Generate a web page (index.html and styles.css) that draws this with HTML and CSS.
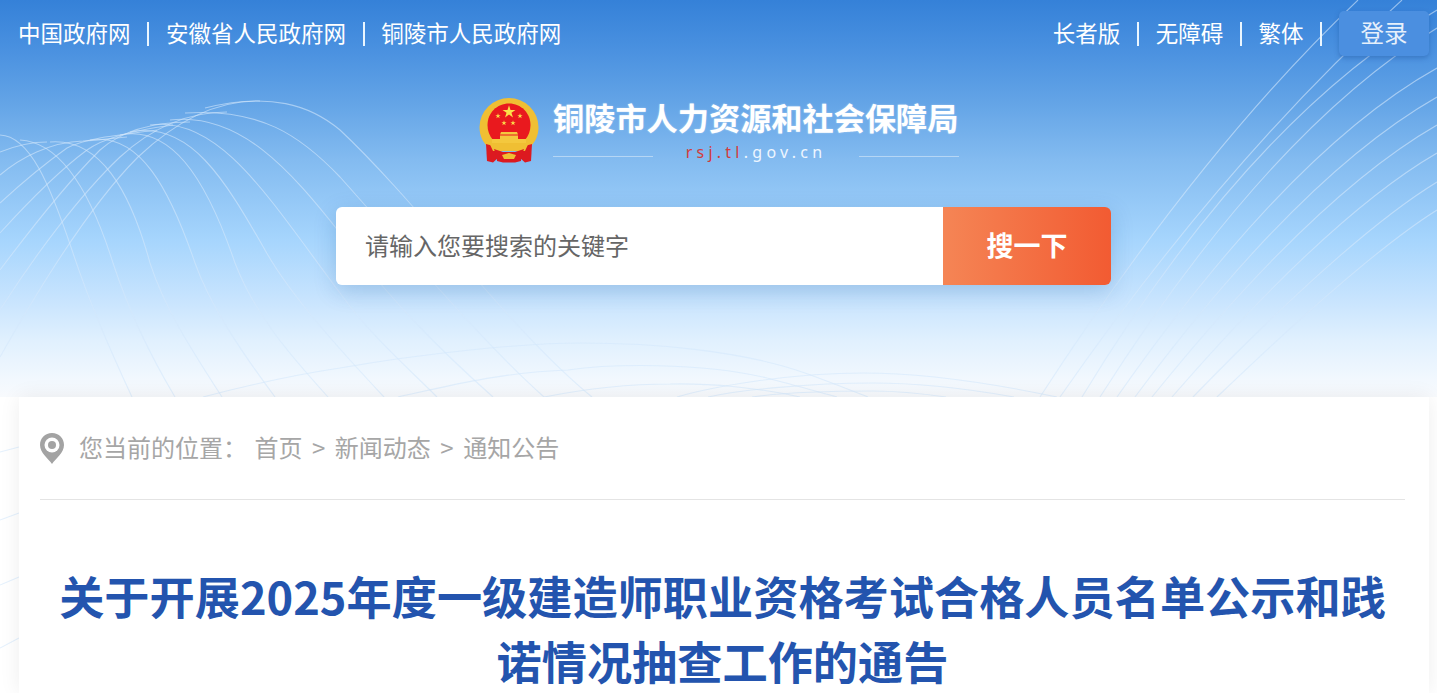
FILE: index.html
```html
<!DOCTYPE html>
<html lang="zh-CN">
<head>
  <meta charset="utf-8">
  <title>铜陵市人力资源和社会保障局</title>
  <link rel="stylesheet" href="styles.css">
</head>
<body>
  <svg class="bg-lines" viewBox="0 0 1437 693" aria-hidden="true">
    <!-- left wave, falling side -->
    <g class="wave">
      <path d="M0 135C30 136 50 185 72 250C90 305 110 350 132 397"/>
      <path d="M20 140C60 142 90 190 113 263C130 315 150 355 175 397"/>
      <path d="M50 142C100 138 130 190 150 263C165 310 195 355 222 397"/>
      <path d="M90 140C140 132 170 190 195 263C210 305 240 350 275 397"/>
      <path d="M120 135C170 125 205 175 235 263C255 315 290 355 328 397"/>
      <path d="M130 132C190 120 225 180 265 250C290 295 340 350 384 397"/>
      <path d="M150 125C220 115 270 200 340 293C370 335 405 365 437 397"/>
      <path d="M170 120C240 112 290 170 340 233C390 300 440 350 493 397"/>
      <path d="M185 113C260 108 300 135 340 177C410 255 480 340 544 397"/>
      <path d="M205 108C270 92 310 105 340 130C420 205 510 330 592 397"/>
    </g>
    <!-- left wave, rising side -->
    <g class="wave">
      <path d="M0 357C35 295 90 205 138 157C175 122 215 100 260 101"/>
      <path d="M0 310C35 255 80 195 120 157C155 125 190 112 227 112"/>
      <path d="M0 270C30 230 65 185 100 150C125 128 160 122 190 122"/>
      <path d="M0 233C30 200 60 170 87 150C105 137 135 130 173 125"/>
      <path d="M0 203C25 180 50 160 67 148C85 138 120 135 157 130"/>
      <path d="M0 175C20 158 50 142 83 141C100 140 115 138 127 137"/>
      <path d="M0 152C15 146 30 142 47 142"/>
    </g>
    <!-- right fan -->
    <g class="wave">
      <path d="M1358 0Q1200 150 1040 397"/>
      <path d="M1402 0Q1225 160 1060 397"/>
      <path d="M1437 10Q1250 120 1082 397"/>
      <path d="M1437 28Q1270 130 1100 397"/>
      <path d="M1437 68Q1290 150 1117 397"/>
      <path d="M1437 97Q1300 175 1135 397"/>
      <path d="M1437 125Q1315 195 1152 397"/>
      <path d="M1437 153Q1330 215 1172 397"/>
      <path d="M1437 182Q1350 235 1193 397"/>
      <path d="M1437 210Q1365 255 1217 397"/>
    </g>
    <!-- low arcs above the card -->
    <g class="wave">
      <path d="M203 397C260 382 300 374 340 368C420 354 520 343 582 343C650 343 740 350 805 373C830 382 850 390 868 397"/>
      <path d="M398 397C440 388 500 372 568 370C610 364 700 362 767 378C790 384 815 391 837 397"/>
      <path d="M544 397C590 388 630 384 670 384C710 383 760 388 800 397"/>
      <path d="M677 397C710 387 790 373 863 373C930 373 1000 385 1057 397"/>
      <path d="M708 397C740 390 810 383 873 383C920 383 975 390 1014 397"/>
      <path d="M752 397C780 393 830 391 873 391C900 391 925 394 946 397"/>
      <path d="M0 452L19 447M0 520L19 513M0 585L19 577M0 648L19 638"/>
    </g>
  </svg>

  <header class="hero">
    <div class="topbar">
      <nav class="links">
        <a href="#">中国政府网</a>
        <span class="sep"></span>
        <a href="#">安徽省人民政府网</a>
        <span class="sep"></span>
        <a href="#">铜陵市人民政府网</a>
      </nav>
      <nav class="links">
        <a href="#">长者版</a>
        <span class="sep"></span>
        <a href="#">无障碍</a>
        <span class="sep"></span>
        <a href="#">繁体</a>
        <span class="sep"></span>
        <a href="#" class="login">登录</a>
      </nav>
    </div>

    <div class="brand">
      <svg class="emblem" viewBox="0 0 60 66" aria-hidden="true">
        <defs>
          <polygon id="star" points="0,-1 .225,-.309 .951,-.309 .363,.118 .588,.809 0,.382 -.588,.809 -.363,.118 -.951,-.309 -.225,-.309"/>
        </defs>
        <path d="M30 1A29.500 29.500 0 0 0 .5 30C.5 39 4 46 11 52H49C56 46 59.500 39 59.500 30A29.500 29.500 0 0 0 30 1Z" fill="#f0bf33"/>
        <path d="M30 6.500C18 6.500 8.500 16 8.500 28C8.500 34 10.500 39 14 43H46C49.500 39 51.500 34 51.500 28C51.500 16 42 6.500 30 6.500Z" fill="#e9191e"/>
        <g fill="#fbe04a">
          <use href="#star" transform="translate(30 15) scale(6.8)"/>
          <use href="#star" transform="translate(19 19) scale(2.8)"/>
          <use href="#star" transform="translate(41 19) scale(2.8)"/>
          <use href="#star" transform="translate(25 26) scale(2.8)"/>
          <use href="#star" transform="translate(34 26) scale(2.8)"/>
        </g>
        <path d="M22 35H38L39 37.500H21Z" fill="#f4c83e"/>
        <path d="M21 38.500H39V42H47V46H13V42H21Z" fill="#f4c83e"/>
        <path d="M7 47L18 50L19 61L14 65.500L8 64Z" fill="#dc1a20"/>
        <path d="M53 47L42 50L41 61L46 65.500L52 64Z" fill="#dc1a20"/>
        <path d="M11 47.500C18 45.500 42 45.500 49 47.500L46 54H14Z" fill="#f0bf33"/>
        <path d="M15 52L24 55H36L45 52L43 58H17Z" fill="#dc1a20"/>
        <path d="M18 58H42V64L36 65.500H24L18 64Z" fill="#dc1a20"/>
        <path d="M23 58L30 56L37 58L35 62H25Z" fill="#f0bf33"/>
      </svg>
      <div class="brand-text">
        <div class="brand-name">铜陵市人力资源和社会保障局</div>
        <div class="brand-sub">
          <span class="rule"></span>
          <span class="domain"><em>rsj.tl</em>.gov.cn</span>
          <span class="rule"></span>
        </div>
      </div>
    </div>

    <form class="search">
      <input type="text" class="search-input" placeholder="请输入您要搜索的关键字">
      <button type="button" class="search-btn">搜一下</button>
    </form>
  </header>

  <main class="card">
    <div class="crumbs">
      <svg class="pin" viewBox="0 0 24 31" aria-hidden="true">
        <path d="M12 0C5 0 0 5.200 0 12C0 20 8 25 12 31C16 25 24 20 24 12C24 5.200 19 0 12 0Z" fill="#a3a3a3"/>
        <circle cx="12" cy="12" r="7.500" fill="#fff"/>
        <circle cx="12" cy="12" r="4" fill="#a3a3a3"/>
      </svg>
      <span class="here">您当前的位置：</span>
      <a href="#">首页</a>
      <span>&gt;</span>
      <a href="#">新闻动态</a>
      <span>&gt;</span>
      <a href="#">通知公告</a>
    </div>
    <h1 class="title">关于开展2025年度一级建造师职业资格考试合格人员名单公示和践诺情况抽查工作的通告</h1>
  </main>
</body>
</html>
```

FILE: styles.css
```css
html {
  overflow: hidden;
}

body {
  margin: 0;
  height: 693px;
  overflow: hidden;
  position: relative;
  background: #fff;
  font-family: "Noto Sans CJK SC", "Noto Sans", sans-serif;
}

a {
  color: inherit;
  text-decoration: none;
}

.bg-lines {
  position: absolute;
  top: 0;
  left: 0;
  width: 1437px;
  height: 693px;
  z-index: 1;
}

.wave path {
  fill: none;
  stroke: #d3e8fc;
  stroke-width: 1.1;
  opacity: 0.6;
}

.hero {
  height: 397px;
  background: linear-gradient(180deg, #3581d8 0, #4a91e0 50px, #62a3e6 100px, #83bbf0 160px, #a6d5fd 240px, #c8e4fe 300px, #e0f0fe 340px, #f2f8fe 380px, #f8fafd 397px);
}

.topbar, .brand, .search, .card {
  position: relative;
  z-index: 2;
}

.topbar {
  display: flex;
  justify-content: space-between;
  align-items: center;
  height: 45px;
  padding: 11px 8px 0 18px;
}

.links {
  display: flex;
  align-items: center;
  gap: 16.7px;
  color: #fff;
  font-size: 22.5px;
  line-height: 43px;
}

.links a {
  padding-bottom: 2px;
}

.sep {
  width: 2px;
  height: 24px;
  background: #eaf6ff;
}

.links .login {
  width: 90px;
  height: 45px;
  padding: 0;
  text-align: center;
  color: #e6f0fb;
  font-size: 23.5px;
  background: #4b8fe0;
  border-radius: 5px;
  box-shadow: 0 2px 5px rgba(20, 70, 140, 0.35);
}

.brand {
  display: flex;
  width: 489px;
  margin: 41px auto 0 479px;
}

.emblem {
  width: 60px;
  height: 66px;
  flex: none;
}

.brand-text {
  margin-left: 14px;
}

.brand-name {
  padding-bottom: 4px;
  color: #fff;
  font-size: 31.2px;
  font-weight: 700;
  line-height: 40px;
  white-space: nowrap;
  text-shadow: 0 0 2px rgba(255, 255, 255, 0.4);
}

.brand-sub {
  display: flex;
  align-items: center;
  justify-content: space-between;
  width: 406px;
  height: 20px;
  margin-top: 1px;
}

.rule {
  width: 100px;
  height: 1px;
  margin-top: 8px;
  background: #b5d6f5;
}

.domain {
  color: #eef6ff;
  font-family: "Noto Sans", sans-serif;
  font-size: 16px;
  letter-spacing: 4.25px;
  line-height: 20px;
}

.domain em {
  font-style: normal;
  color: #d23c3c;
}

.search {
  display: flex;
  width: 775px;
  height: 78px;
  margin: 44px 0 0 336px;
  border-radius: 6px;
  box-shadow: 0 6px 22px rgba(20, 80, 150, 0.22);
}

.search-input {
  flex: 1;
  min-width: 0;
  padding: 0 30px 4px 29px;
  border: none;
  outline: none;
  background: #fff;
  border-radius: 6px 0 0 6px;
  font-family: inherit;
  font-size: 24px;
}

.search-input::placeholder {
  color: #666;
  opacity: 1;
}

.search-btn {
  width: 168px;
  padding: 0 0 4px;
  border: none;
  border-radius: 0 6px 6px 0;
  background: linear-gradient(90deg, #f58555, #f25b32);
  color: #fff;
  font-family: inherit;
  font-size: 27px;
  font-weight: 700;
  cursor: pointer;
}

.card {
  margin: 0 8px 0 19px;
  height: 296px;
  padding: 0 24px 0 21px;
  background: #fff;
  box-shadow: 0 0 20px rgba(0, 0, 0, 0.07);
}

.crumbs {
  display: flex;
  align-items: center;
  gap: 9.5px;
  height: 98px;
  padding-bottom: 4px;
  border-bottom: 1px solid #e4e4e4;
  color: #a6a6a6;
  font-size: 24px;
}

.pin {
  width: 24px;
  height: 31px;
  margin: 4px 5.5px 0 0;
}

.here {
  margin-right: -2px;
}

.title {
  margin: 63px 0 0;
  text-align: center;
  color: #2354ae;
  font-size: 45.2px;
  font-weight: 700;
  line-height: 65px;
}
```
